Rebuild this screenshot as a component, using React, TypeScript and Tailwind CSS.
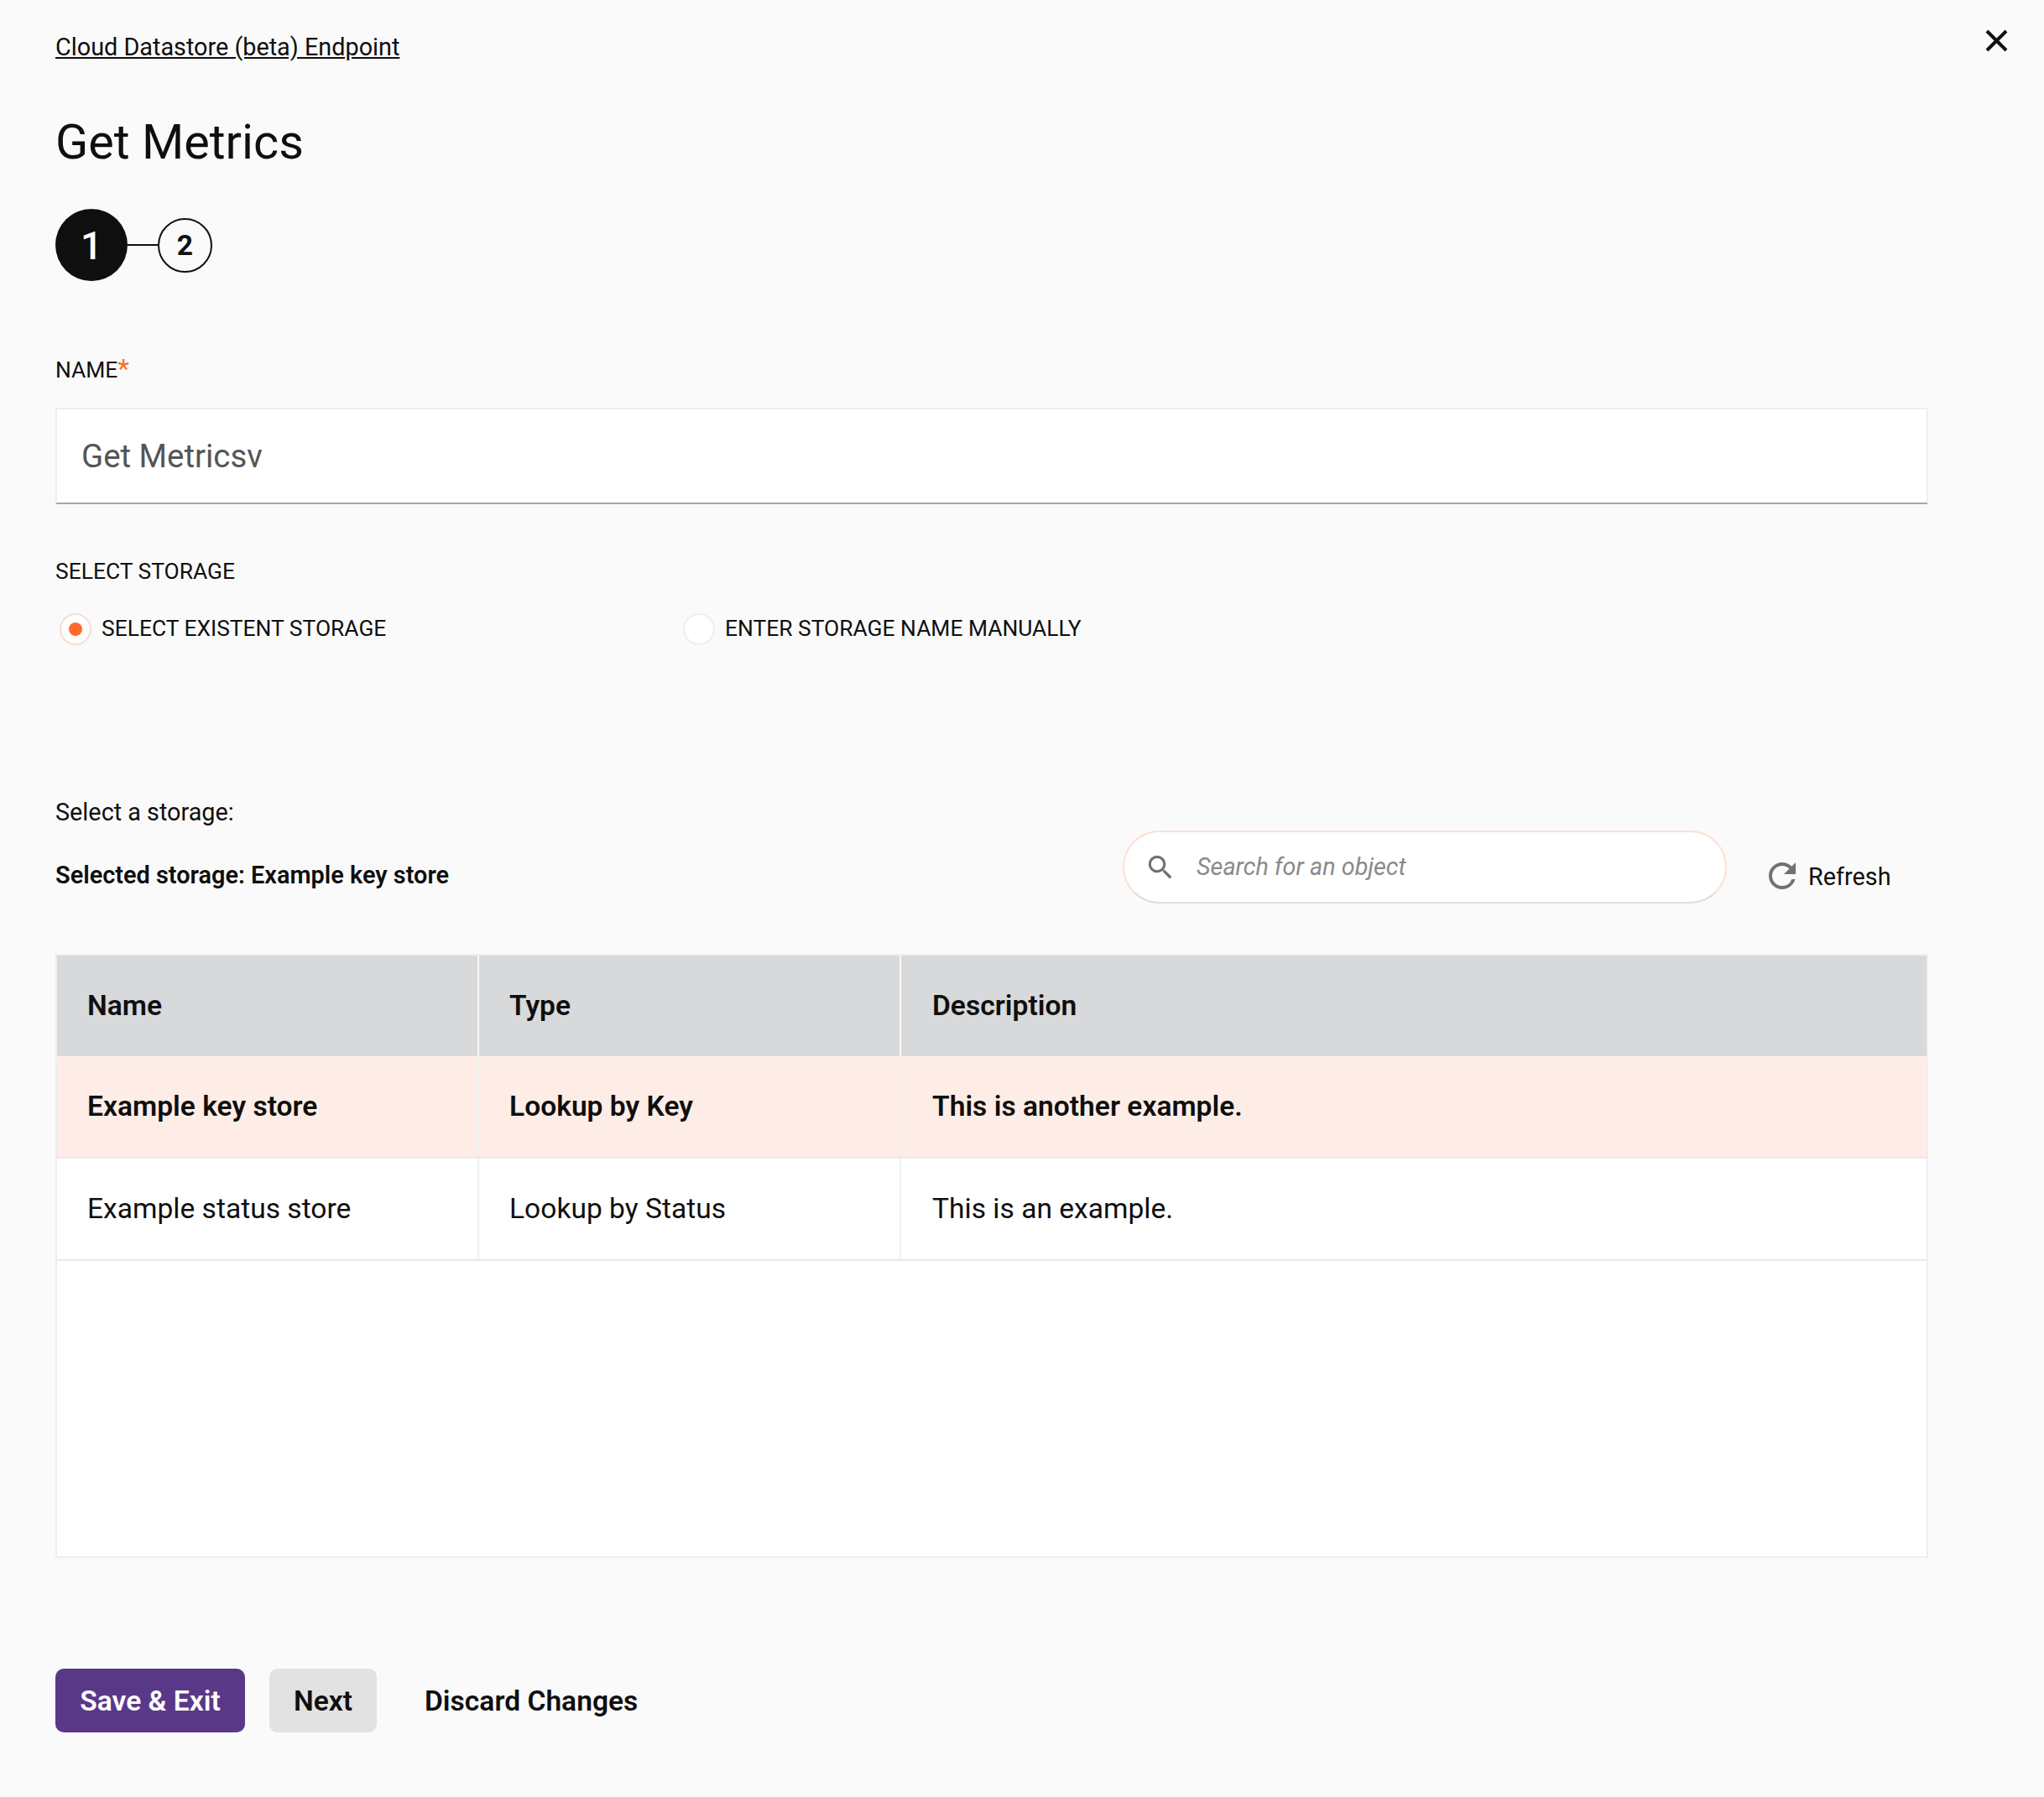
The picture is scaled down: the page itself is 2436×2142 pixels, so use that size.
const Th = ({ children, w, last }: { children: string; w: string; last?: boolean }) => (
  <div className={`${w} flex items-center ${last ? "pl-[37px]" : "pl-[36px] border-r-2 border-[#fafafa]"}`}>{children}</div>
);

const Row = ({ cells, selected }: { cells: string[]; selected?: boolean }) => (
  <div className={`flex h-[122px] border-b-2 border-[#e8e8e8] text-[33.6px] ${selected ? "bg-[#feede6] font-semibold" : "bg-white"}`}>
    <div className="w-[503px] flex items-center pl-[36px] border-r-2 border-[#f0f0f0]">{cells[0]}</div>
    <div className="w-[503px] flex items-center pl-[36px] border-r-2 border-[#f0f0f0]">{cells[1]}</div>
    <div className="flex-1 flex items-center pl-[37px]">{cells[2]}</div>
  </div>
);

export default function App() {
  return (
    <div className="relative w-[2436px] h-[2142px] bg-[#fafafa] text-[#0f0f0f] font-['Roboto',sans-serif] pl-[66px] pr-[138px] pt-[38px]">
      <button className="absolute left-[2366px] top-[35px] w-[27px] h-[27px]">
        <svg viewBox="0 0 27 27" className="w-full h-full"><path d="M2 2 L25 25 M25 2 L2 25" stroke="#111" strokeWidth="4" fill="none" /></svg>
      </button>
      <a className="block text-[28.8px] leading-[36px] underline">Cloud Datastore (beta) Endpoint</a>
      <h1 className="mt-[60px] text-[57.6px] leading-[72px] font-normal">Get Metrics</h1>
      <div className="mt-[43px] flex items-center h-[86px]">
        <div className="w-[86px] h-[86px] pt-[2px] rounded-full bg-[#0f0f0f] text-white flex items-center justify-center text-[46px] font-medium">1</div>
        <div className="w-[36px] h-[2px] bg-[#0f0f0f]" />
        <div className="w-[65px] h-[65px] pt-[2px] rounded-full border-2 border-[#0f0f0f] flex items-center justify-center text-[33.6px] font-bold">2</div>
      </div>
      <div className="mt-[90px] text-[26.4px] leading-[32px]">NAME<span className="text-[#ff6a2b] text-[32px] leading-[20px]">*</span></div>
      <div className="mt-[29px] h-[115px] pt-[1px] bg-white border-2 border-[#eeeeee] border-b-[#a6a6a6] flex items-center pl-[29px] text-[38.4px] text-[#555555]">Get Metricsv</div>
      <div className="mt-[64px] text-[26.4px] leading-[32px]">SELECT STORAGE</div>
      <div className="mt-[33px] flex items-center h-[40px] text-[26.4px]">
        <div className="ml-[5px] w-[38px] h-[38px] rounded-full bg-white border-2 border-[#f4ddd4] flex items-center justify-center">
          <div className="w-[16px] h-[16px] rounded-full bg-[#ff6a2b]" />
        </div>
        <span className="ml-[12px] w-[693px]">SELECT EXISTENT STORAGE</span>
        <div className="w-[38px] h-[38px] rounded-full bg-white border-2 border-[#eeeeee]" />
        <span className="ml-[12px]">ENTER STORAGE NAME MANUALLY</span>
      </div>
      <div className="mt-[180px] text-[28.8px] leading-[36px]">Select a storage:</div>
      <div className="mt-[4px] flex items-start h-[104px]">
        <div className="mt-[35px] w-[1272px] shrink-0 text-[28.9px] leading-[36px] font-semibold">Selected storage: Example key store</div>
        <div className="w-[720px] h-[87px] rounded-full bg-white border-2 border-[#fddfd4] border-b-[#dddddd] flex items-center pl-[24px]">
          <svg viewBox="0 0 24 24" className="w-[38px] h-[38px]"><path d="M15.5 14h-.79l-.28-.27A6.47 6.47 0 0 0 16 9.5 6.5 6.5 0 1 0 9.5 16c1.61 0 3.09-.59 4.23-1.57l.27.28v.79l5 4.99L20.49 19l-4.99-5zm-6 0C7.01 14 5 11.99 5 9.5S7.01 5 9.5 5 14 7.01 14 9.5 11.99 14 9.5 14z" fill="#6f7271" /></svg>
          <span className="ml-[24px] text-[28.8px] italic text-[#8a8a8a]">Search for an object</span>
        </div>
        <div className="ml-[42px] mt-[30px] flex items-center text-[28.8px]">
          <svg viewBox="0 0 24 24" className="w-[48px] h-[48px]"><path d="M17.65 6.35A7.958 7.958 0 0 0 12 4c-4.42 0-7.99 3.58-7.99 8s3.57 8 7.99 8c3.73 0 6.84-2.55 7.73-6h-2.08A5.99 5.99 0 0 1 12 18c-3.31 0-6-2.69-6-6s2.69-6 6-6c1.66 0 3.14.69 4.22 1.78L13 11h7V4l-2.35 2.35z" fill="#6f7271" /></svg>
          <span className="ml-[7px] pt-[3px]">Refresh</span>
        </div>
      </div>
      <div className="mt-[43px] h-[720px] bg-white border-2 border-[#eeeeee]">
        <div className="flex h-[120px] bg-[#d8d9db] text-[33.6px] font-semibold">
          <Th w="w-[503px]">Name</Th>
          <Th w="w-[503px]">Type</Th>
          <Th w="flex-1" last>Description</Th>
        </div>
        <Row selected cells={["Example key store", "Lookup by Key", "This is another example."]} />
        <Row cells={["Example status store", "Lookup by Status", "This is an example."]} />
      </div>
      <div className="mt-[132px] flex items-center text-[33.6px] font-semibold">
        <button className="w-[226px] h-[76px] pt-[2px] rounded-[10px] bg-[#5a3888] text-white">Save &amp; Exit</button>
        <button className="ml-[29px] w-[128px] h-[76px] pt-[2px] rounded-[10px] bg-[#e2e2e2]">Next</button>
        <button className="ml-[57px] pt-[2px]">Discard Changes</button>
      </div>
    </div>
  );
}
